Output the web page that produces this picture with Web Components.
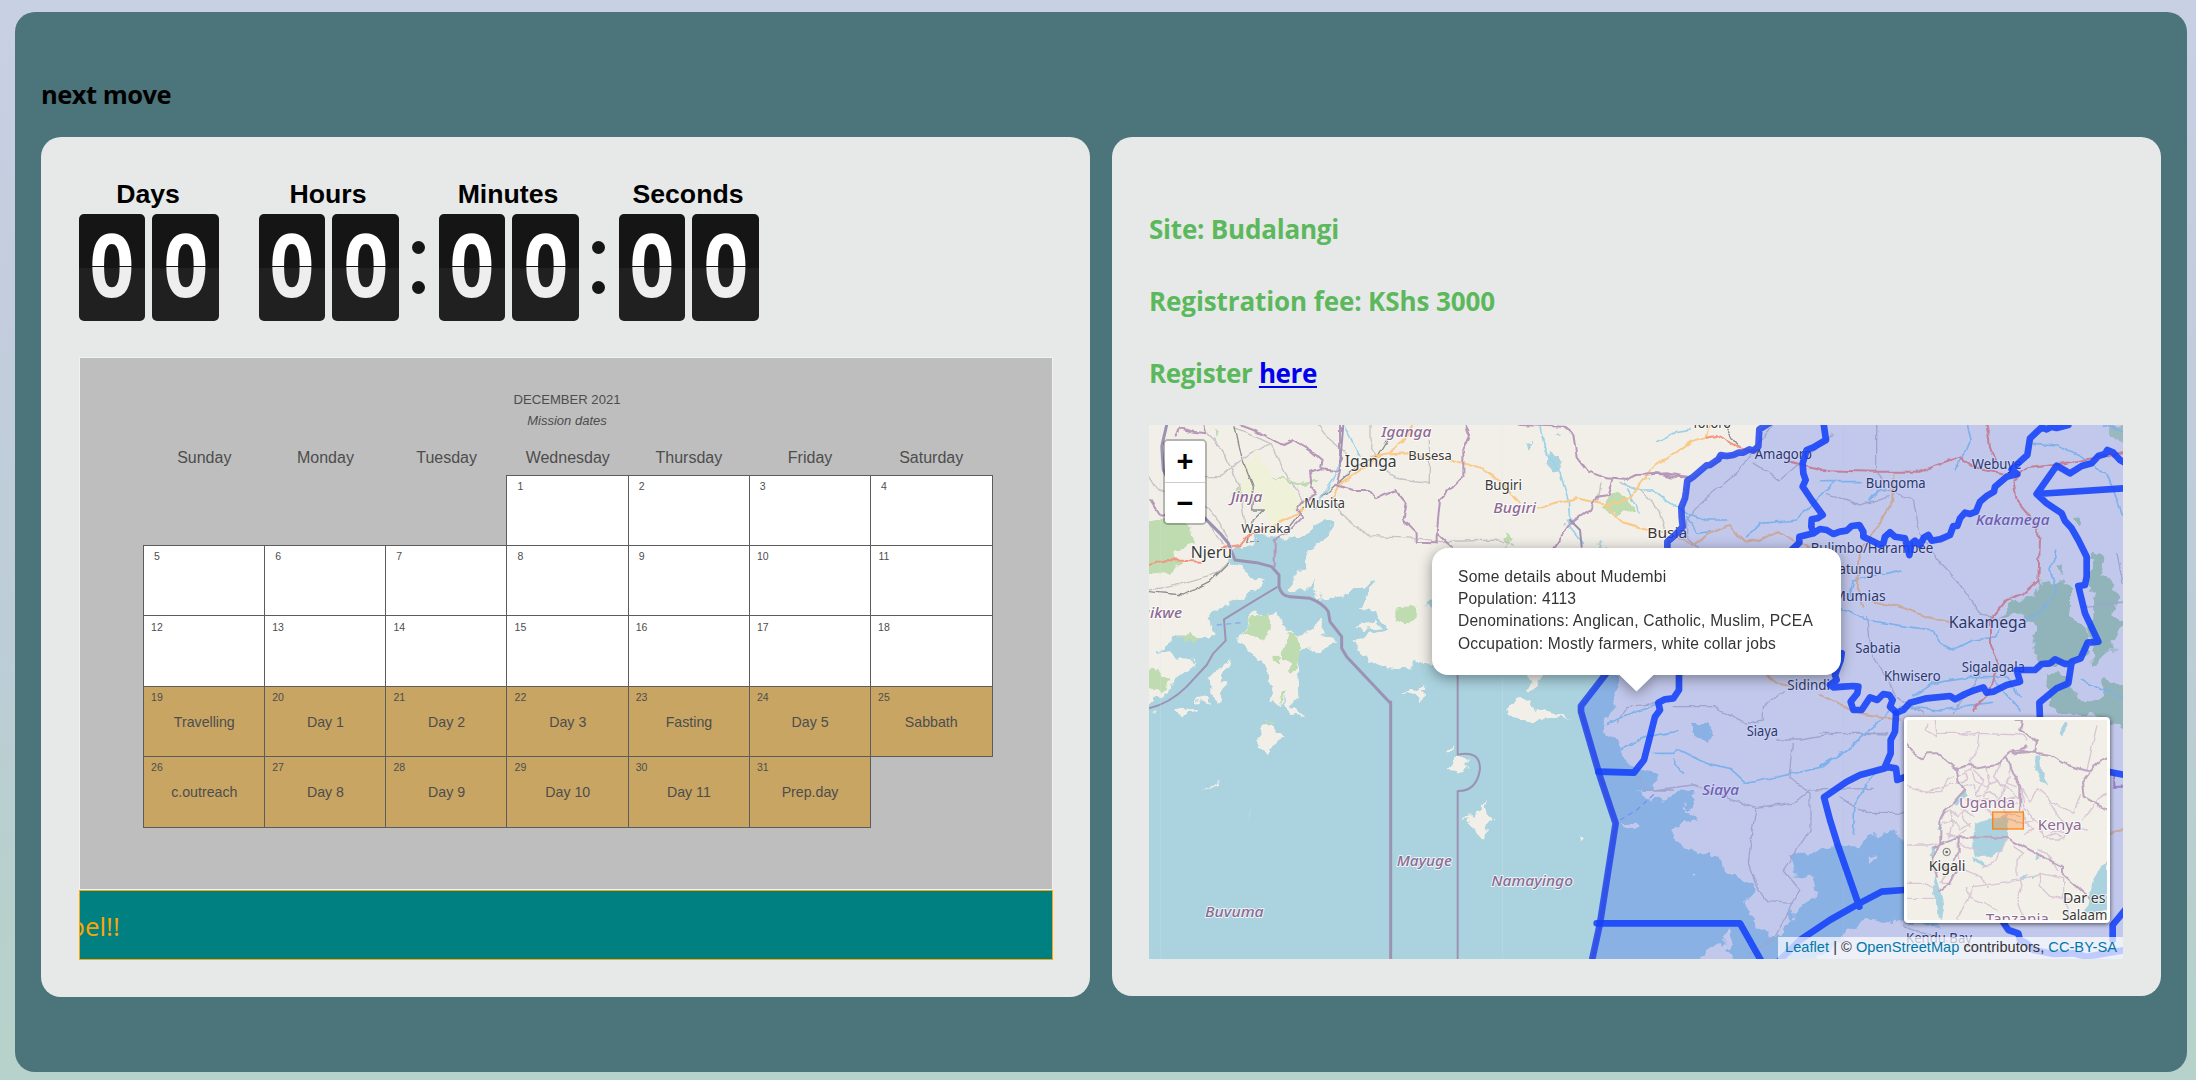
<!DOCTYPE html>
<html lang="en">
<head>
<meta charset="utf-8">
<title>next move</title>
<style>
html,body{margin:0;height:100%}
body{background:linear-gradient(to bottom,#c8d1e3 0%,#c4cdde 25%,#bccdd6 60%,#b7d0cc 85%,#b7d2cb 100%);font-family:"Open Sans","Noto Sans",sans-serif;height:1080px;overflow:hidden;display:flow-root}
</style>
</head>
<body>
<next-move heading="next move">
  <info-card slot="cards">
    <flip-clock></flip-clock>
    <mission-calendar></mission-calendar>
    <ticker-bar>pel!!</ticker-bar>
  </info-card>
  <info-card slot="cards" class="right">
    <site-line w="190">Site: Budalangi</site-line>
    <site-line w="346">Registration fee: KShs 3000</site-line>
    <site-line w="168">Register <a href="#">here</a></site-line>
    <site-map></site-map>
  </info-card>
</next-move>
<script>
const define=(name,html,after)=>customElements.define(name,class extends HTMLElement{
  connectedCallback(){
    if(this.shadowRoot)return;
    this.attachShadow({mode:'open'}).innerHTML=typeof html==='function'?html(this):html;
    if(after)after(this);
  }
});
/* Spreads a line of text to a set measure with letter spacing. */
const fit=(el,w)=>{
  const n=el.dataset.n||el.textContent.length;
  el.style.letterSpacing=((w-el.getBoundingClientRect().width)/n)+'px';
};

define('fit-text',`<style>:host{display:inline-block;white-space:pre}</style><slot></slot>`,
  el=>fit(el,+el.getAttribute('w')));

define('next-move',el=>`<style>
:host{display:flex;flex-direction:column;box-sizing:border-box;margin:12px 9px 0 15px;width:2172px;height:1060px;border-radius:20px;background:#4c747b;padding:62px 26px 0}
h2{margin:0 0 23px;font-size:25.5px;line-height:40px;height:40px;font-weight:700;color:#000}
.row{display:flex;gap:22px;align-items:flex-start}
</style><h2><fit-text w="130">${el.getAttribute('heading')}</fit-text></h2><div class="row"><slot name="cards"></slot></div>`);

define('info-card',`<style>
:host{display:flex;flex-direction:column;box-sizing:border-box;width:1049px;height:860px;border-radius:20px;background:#e7e9e8;padding:42px 37px 0 38px}
:host(.right){height:859px;padding:56px 38px 0 37px}
</style><slot></slot>`);

define('flip-unit',el=>`<style>
:host{display:flex;flex-direction:column;align-items:center;gap:5px;width:140px}
b{font:700 26.67px/30px "Liberation Sans",sans-serif;color:#000;margin-right:2px}
b fit-text{display:block}
div{display:flex;gap:7px}
.d{width:66px;height:107px;border-radius:5px;background:linear-gradient(#151515 54px,#202020 54px);display:flex;justify-content:center;overflow:hidden}
.d:last-child{width:67px}
.d span{font:700 87px/99px "Open Sans","Noto Sans",sans-serif;transform:scaleX(.9);background:linear-gradient(#fff 52px,#151515 52px 53px,#eee 53px);-webkit-background-clip:text;background-clip:text;color:transparent}
</style><b>${el.getAttribute('label')}</b><div><div class="d"><span>0</span></div><div class="d"><span>0</span></div></div>`);

define('flip-clock',`<style>
:host{display:flex;height:142px;margin-bottom:36px}
.sep{width:40px;display:flex;flex-direction:column;align-items:center;gap:27px;padding:62px 1px 0 0;box-sizing:border-box}
.sep i{width:13px;height:13px;border-radius:50%;background:#151515}
</style>
<flip-unit label="Days"></flip-unit><div class="sep"></div>
<flip-unit label="Hours"></flip-unit><div class="sep"><i></i><i></i></div>
<flip-unit label="Minutes"></flip-unit><div class="sep"><i></i><i></i></div>
<flip-unit label="Seconds"></flip-unit>`);

const events={19:'Travelling',20:'Day 1',21:'Day 2',22:'Day 3',23:'Fasting',24:'Day 5',25:'Sabbath',26:'c.outreach',27:'Day 8',28:'Day 9',29:'Day 10',30:'Day 11',31:'Prep.day'};
define('mission-calendar',()=>{
  let cells='<i></i><i></i><i></i>';
  for(let d=1;d<32;d++)cells+=`<div class="c${d>18?' on':''}"><small>${d}</small>${events[d]?`<span>${events[d]}</span>`:''}</div>`;
  return `<style>
:host{display:flex;flex-direction:column;align-items:center;box-sizing:border-box;width:974px;height:533px;border:1px solid #f1f2f2;background:#bebebe;padding:31.5px 0 0 2px;font-family:"Liberation Sans",sans-serif;color:#4d4d4d}
h3{margin:0 0 1.3px;font:400 13.1px/20px "Liberation Sans",sans-serif}
em{font-size:13px;line-height:20px;margin-bottom:17.7px}
.w,.g{display:grid;grid-template-columns:repeat(7,1fr);width:848.1px;margin-left:1.5px}
.w{font-size:16px;line-height:20px;text-align:center;margin-bottom:6.8px}
.g{grid-template-rows:repeat(5,70.35px)}
.c{margin:-.75px;border:1px solid #5c5c5c;background:#fff;display:flex;flex-direction:column;align-items:center}
.on{background:#c8a563}
small{font-size:10.5px;line-height:14px;width:26px;text-align:center;align-self:flex-start;margin-top:3.5px}
span{font-size:14.2px;line-height:18px;margin-top:9px}
</style><h3>DECEMBER 2021</h3><em>Mission dates</em>
<div class="w">${'Sunday Monday Tuesday Wednesday Thursday Friday Saturday'.split(' ').map(d=>`<div>${d}</div>`).join('')}</div>
<div class="g">${cells}</div>`;
});

define('ticker-bar',`<style>
:host{display:block;box-sizing:border-box;width:974px;height:70px;border:1px solid orange;background:teal;color:orange;font-size:26px;line-height:71px;overflow:hidden;white-space:nowrap}
div{margin-left:-11px}
</style><div><fit-text w="53.5"><slot></slot></fit-text></div>`);

define('site-line',`<style>
:host{display:block;height:72px;line-height:72px;font-size:26px;font-weight:700;color:#5cb85c;white-space:nowrap}
span{display:inline-block;white-space:pre}
::slotted(a){color:#00e;text-decoration-thickness:2px;text-underline-offset:3px}
</style><span><slot></slot></span>`,el=>{
  const s=el.shadowRoot.querySelector('span');
  s.dataset.n=el.textContent.length;
  fit(s,+el.getAttribute('w'));
});

/* Map labels: [x, baseline, width, size, text, kind]; kind "d" is a district. */
const labels=[
[724,50,150,40,'Iganga','d'],[805,119,130,35,'Busesa'],[614,140,156,43,'Iganga'],[493,263,122,37,'Musita'],
[272,246,95,40,'Jinja','d'],[304,338,148,35,'Wairaka'],[152,415,124,43,'Njeru'],[-26,595,152,40,'Buikwe','d'],
[1034,210,112,37,'Bugiri'],[1060,278,128,40,'Bugiri','d'],[1655,24,118,37,'Tororo'],[1844,118,172,36,'Amagoro'],
[1522,353,120,39,'Busia'],[2012,399,368,36,'Bulimbo/Harambee'],[2177,203,180,36,'Bungoma'],[2495,148,150,36,'Webuye'],
[2507,314,222,40,'Kakamega','d'],[2062,461,163,36,'Matungu'],[2080,542,157,36,'Mumias'],[2426,624,234,43,'Kakamega'],
[2146,700,136,36,'Sabatia'],[2465,755,190,36,'Sigalagala'],[2232,784,170,36,'Khwisero'],[1942,809,128,36,'Sidindi'],
[1820,947,94,37,'Siaya'],[1687,1124,110,40,'Siaya','d'],[1054,1397,245,40,'Namayingo','d'],[770,1337,166,40,'Mayuge','d'],
[195,1490,176,40,'Buvuma','d'],[2298,1570,198,36,'Kendu Bay']];
const mini=[[156,265,168,38,'Uganda','m'],[392,330,132,38,'Kenya','m'],[65,453,110,37,'Kigali'],[468,550,128,37,'Dar es'],[465,600,136,37,'Salaam'],[236,613,190,38,'Tanzania','m']];
const text=a=>a.map(([x,y,w,s,t,k])=>`<text class="${k||''}" x="${x}" y="${y}" font-size="${(s*1.14).toFixed(1)}" textLength="${w}" lengthAdjust="spacingAndGlyphs">${t}</text>`).join('');

const svgStyle=`
svg{display:block}
text{font-family:"Noto Sans",sans-serif;fill:#3a3a3a;stroke:#fff;stroke-opacity:.75;stroke-width:6;paint-order:stroke;stroke-linejoin:round}
.d{font-style:italic;font-weight:500;fill:#8d6a93}.m{fill:#8d6a93}
.w{fill:#aad3df}.l{fill:#f2efe9}.f{fill:#bfdcb0}
.n,.r,.o,.p,.s,.k,.x{fill:none;stroke-linejoin:round;stroke-linecap:round}
.n{stroke:#c4c4c4;stroke-width:4}.o{stroke:#fbc987;stroke-width:6}.x{stroke:#f2967f;stroke-width:6}
.p{stroke:#b797b8;stroke-width:6}.k{stroke:#9c93b2;stroke-width:9}.s{stroke:#9bd2e8;stroke-width:5}.r{stroke:#8e8e8e;stroke-width:4}`;

define('map-overview',`<style>
:host{display:block;box-sizing:border-box;width:206px;height:206px;border:3px solid #fff;border-radius:4px;box-shadow:0 1px 5px rgba(0,0,0,.65);overflow:hidden;background:#f2efe9}
${svgStyle}.p{stroke:#d8c6d5;stroke-width:4}.k{stroke:#bda5bf;stroke-width:6}
</style><svg width="200" height="200" viewBox="0 0 600 600">
<defs><filter id="j" color-interpolation-filters="sRGB" x="0" y="0" width="100%" height="100%"><feTurbulence type="fractalNoise" baseFrequency=".035" numOctaves="2" seed="4"/><feDisplacementMap in="SourceGraphic" scale="14" xChannelSelector="R" yChannelSelector="G"/></filter></defs>
<g filter="url(#j)">
<path class="w" d="M205 310 230 300 300 285 303 350 285 395 250 410 205 410 195 380ZM385 105 400 110 402 150 420 190 425 200 405 185 385 150ZM468 15 475 5 482 15 465 50 458 40ZM600 425 582 435 555 490 545 555 525 580 600 570ZM75 380 85 390 80 415 68 410ZM85 465 95 500 105 520 112 560 105 600 95 595 90 545 75 520ZM90 325 110 312 103 330ZM140 250 175 212 180 225 150 260ZM335 475 360 462 355 480ZM375 470 385 462 380 480ZM390 395 400 415 385 425ZM195 410 235 430 250 440 200 425Z"/>
<path class="p" d="M60 15 55 30 90 50 85 0M90 40 160 40 190 35M160 40 200 45 215 40 345 45M215 45 210 100 190 120 195 145M0 195 50 215 110 200 140 190M50 215 100 215 120 180 140 170M360 70 340 100 310 90M345 45 360 60M570 15 555 80 540 150M600 220 570 240 550 270 530 300M345 205 370 245 390 205 440 250 500 280 520 225M430 250 460 300 500 320 540 330M345 205 350 260 390 310M395 330 430 360 460 360 480 340 440 330 430 350M0 375 60 375 110 370M0 490 50 490 90 510M0 535 90 535M150 600 200 500 300 485 340 480 345 500 330 540 350 600M175 500 185 530 270 570M340 480 400 460 470 475M400 465 400 500 430 530 500 540M470 475 470 530 490 600M300 355 270 420 230 440M450 450 420 400 390 390M150 440 220 470 240 500M320 380 350 400 330 420 330 470M215 395 150 370 155 420"/>
<path class="p" d="M150 170 190 150 205 180 240 200 270 180 320 220 340 240M165 200 200 190 210 230 250 215 280 240 330 230M200 150 230 180 210 220M240 145 250 190 230 230M280 130 260 170 290 200 280 240M310 140 300 190 330 200M180 240 260 240 330 250M110 280 130 270 150 290 170 270 200 290M110 310 140 300 160 330 190 310M120 340 150 350 180 330M130 270 140 310 125 350M160 270 170 300 190 320M240 270 270 300 300 280 340 290M290 265 300 300 350 310 380 300M350 270 360 310 380 330 350 340M400 300 410 350 450 340 470 360M110 430 120 460 100 490 130 490M90 450 150 430M310 170 290 200M170 150 180 180 150 190"/>
<path class="k" d="M0 75 20 100 45 115 60 100 90 100 120 125 150 150 155 190 175 210 140 250 115 270 100 300 100 370M150 145 190 135 210 145 270 135 320 90 430 105M300 115 320 160 340 200 340 270M320 100 385 95 390 65 340 30 345 0 325 0M430 105 480 135 550 155 570 130 600 115M550 155 525 190 530 230 600 270M100 370 150 352 300 354 465 440 465 460 550 535M100 370 75 420 90 470M155 355 155 400 140 420M80 385 110 370M100 510 130 490 150 450M320 95 360 80"/>
</g>
<circle cx="119" cy="396" r="11" fill="none" stroke="#777" stroke-width="3"/><circle cx="119" cy="396" r="4" fill="#666"/>
${text(mini)}
<rect x="257" y="276" width="92" height="51" fill="#ff7800" fill-opacity=".3" stroke="#ff7800" stroke-opacity=".85" stroke-width="4"/>
</svg>`);

define('map-popup',`<style>
:host{display:flex;flex-direction:column;align-items:center;filter:drop-shadow(0 3px 7px rgba(0,0,0,.4))}
.b{box-sizing:border-box;width:409px;height:127px;border-radius:16px;background:#fff;padding:17.7px 26px;font:15.6px/22.4px "Liberation Sans",sans-serif;color:#333}
.b div{height:22.4px}
.t{width:34px;height:16.5px;background:#fff;clip-path:polygon(0 0,100% 0,50% 100%)}
</style><div class="b"><div><fit-text w="208.5">Some details about Mudembi</fit-text></div><div><fit-text w="118">Population: 4113</fit-text></div><div><fit-text w="355">Denominations: Anglican, Catholic, Muslim, PCEA</fit-text></div><div><fit-text w="318">Occupation: Mostly farmers, white collar jobs</fit-text></div></div><div class="t"></div>`);

define('zoom-control',`<style>
:host{display:flex;flex-direction:column;width:40px;border:2px solid rgba(0,0,0,.25);border-radius:5px;background-clip:padding-box}
div{height:41px;background:#fff;border-radius:3px 3px 0 0;display:flex;align-items:center;justify-content:center;font:700 29px/41px "Liberation Sans",sans-serif;color:#000}
div+div{border-top:1px solid #ccc;border-radius:0 0 3px 3px;height:40px;line-height:40px}
</style><div>+</div><div>−</div>`);

define('map-credits',`<style>
:host{display:block;box-sizing:border-box;height:22px;width:345px;padding-left:7px;background:rgba(255,255,255,.7);font:14.6px/21px "Liberation Sans",sans-serif;color:#333;white-space:nowrap}
a{color:#0078a8;text-decoration:none}
</style><fit-text w="332"><a>Leaflet</a> | © <a>OpenStreetMap</a> contributors, <a>CC-BY-SA</a></fit-text>`);

define('site-map',`<style>
:host{display:block;position:relative;width:974px;height:534px;margin-top:16px;overflow:hidden;background:#f2efe9}
${svgStyle}
.z{stroke:#1541fb;stroke-opacity:.88;stroke-width:20;fill:none;stroke-linejoin:round;stroke-linecap:round}
zoom-control{position:absolute;left:14px;top:14px}
map-popup{position:absolute;left:283px;top:123px}
map-overview{position:absolute;left:755px;top:292px}
map-credits{position:absolute;right:0;bottom:0}
</style>
<svg width="974" height="534" viewBox="27 15 2922 1602">
<defs>
<filter id="c" color-interpolation-filters="sRGB" filterUnits="userSpaceOnUse" x="0" y="0" width="3000" height="1640"><feTurbulence type="fractalNoise" baseFrequency=".025" numOctaves="3" seed="7"/><feDisplacementMap in="SourceGraphic" scale="46" xChannelSelector="R" yChannelSelector="G"/></filter>
<filter id="q" color-interpolation-filters="sRGB" filterUnits="userSpaceOnUse" x="0" y="0" width="3000" height="1640"><feTurbulence type="fractalNoise" baseFrequency=".03" numOctaves="2" seed="3"/><feDisplacementMap in="SourceGraphic" scale="16" xChannelSelector="R" yChannelSelector="G"/></filter>
</defs>
<g filter="url(#c)">
<path class="f" d="M-10 310 100 290 155 320 165 375 100 390 130 430 90 460 30 450 -10 460ZM320 170 345 185 335 205 315 195ZM270 230 300 195 300 215ZM400 165 440 175 480 185 540 170 530 185 470 195 410 180ZM775 560 830 560 825 600 795 620 775 605ZM2907 10 2960 10 2960 65 2907 60ZM1400 240 1430 215 1470 240 1490 270 1430 285 1385 262ZM1515 185 1530 178 1530 192ZM1095 340 1115 360 1100 385ZM215 35 235 40 225 50Z"/>
<path d="M320 130 350 90 375 150 430 180 470 210 490 260 440 295 390 310 370 260 290 235Z" fill="#eff2d8"/>
<path fill="#b4d5ab" d="M2850 390 2880 400 2890 460 2930 520 2920 580 2950 600 2920 680 2890 710 2860 730 2850 640 2860 560 2850 480ZM2690 490 2760 480 2790 500 2790 570 2810 610 2850 640 2840 700 2790 730 2700 740 2680 690 2690 620 2650 590 2580 590 2620 550 2680 530ZM2740 440 2770 430 2760 465ZM2800 290 2830 280 2820 315ZM2720 760 2780 760 2790 800 2840 850 2890 830 2890 780 2960 790 2960 930 2860 890 2750 880 2720 800Z"/>
<path class="w" d="M262 395 330 385 345 355 400 345 430 365 475 345 505 345 525 310 575 310 580 335 535 365 492 400 500 440 455 465 445 505 490 505 530 480 515 512 550 540 600 525 640 500 705 490 680 530 660 560 705 580 715 600 742 625 700 640 640 655 660 700 720 740 780 745 850 722 900 740 1430 750 1430 812 1420 870 1380 910 1440 980 1475 1040 1550 1070 1540 1105 1500 1120 1565 1150 1600 1125 1660 1100 1670 1135 1630 1170 1670 1195 1590 1230 1630 1280 1670 1310 1730 1300 1760 1360 1840 1390 1850 1410 1815 1450 1850 1510 1890 1560 1930 1530 1960 1480 2035 1430 2010 1365 1960 1360 1950 1310 2080 1280 2090 1265 2150 1290 2200 1240 2250 1240 2310 1260 2400 1300 2400 1520 2300 1510 2210 1500 2130 1520 2110 1560 2000 1640 0 1640 0 870 80 810 130 760 170 720 130 718 60 692 110 645 170 655 225 640 205 590 250 560 310 530 375 485 300 440 262 425Z"/>
<path class="w" d="M1665 915 1700 915 1715 950 1710 975 1685 955 1665 940ZM1230 95 1255 110 1265 130 1240 155 1225 130ZM1160 70 1190 65 1165 85ZM1250 40 1270 42 1255 50ZM1270 300 1300 295 1285 320ZM1370 375 1410 370 1400 380ZM855 555 890 550 885 570Z"/>
<path class="l" d="M295 640 340 585 420 572 440 625 480 650 540 600 560 650 590 670 560 685 500 690 470 705 475 840 440 850 440 800 400 800 380 745 330 690 290 670ZM380 850 400 800 425 780 450 800 465 860 490 890 450 880 435 830 425 860 400 840ZM200 780 250 730 270 720 250 760 245 850 230 850 225 800ZM170 835 205 825 210 860 190 850ZM105 868 170 860 150 880 120 890ZM20 830 60 820 30 850ZM35 875 60 875 50 885ZM360 925 400 915 415 945 440 955 410 965 380 1005 365 985 350 950ZM192 1105 240 1080 230 1095ZM330 1185 340 1165 325 1200ZM790 820 830 810 850 800 845 855 830 835ZM915 995 940 970 935 1000ZM925 1050 950 1018 985 1015 970 1055ZM965 1195 1010 1190 1030 1150 1040 1180 1060 1195 1040 1220 1035 1250 1000 1225ZM1105 870 1130 835 1150 830 1175 860 1200 870 1290 895 1240 900 1180 910 1110 885ZM1155 765 1210 765 1185 800 1175 815 1165 790ZM1310 1255 1325 1250 1325 1270ZM1440 1210 1480 1208 1500 1220 1460 1225ZM1660 1355 1670 1355 1665 1370ZM1670 1640 1700 1590 1740 1570 1770 1600 1780 1640ZM1745 1590 1765 1540 1780 1530 1760 1590ZM2175 1310 2210 1310 2190 1330ZM640 625 700 605 720 625 670 630ZM750 675 765 700 770 720 755 700Z"/>
<path class="f" d="M300 640 330 600 390 570 385 650 350 655ZM440 640 470 640 485 690 450 760 430 700ZM395 720 430 710 415 730ZM110 650 150 640 175 660 130 665ZM30 745 100 780 60 815 20 810ZM420 820 435 815 425 850ZM375 905 395 903 388 915Z"/>
</g>
<g filter="url(#q)">
<path class="n" d="M190 30 240 80 300 200 315 320M390 70 330 100 240 170 150 170M290 25 390 70 430 150 490 240M530 10 560 50 620 100M690 10 690 60 720 140 780 180 868 190 868 60M20 160 50 210 200 260 240 310 270 380M590 250 600 280 690 350 840 355 900 365 1080 360 1120 375M27 510 90 500 230 460 265 425M200 300 250 380M1590 380 1560 270 1500 210 1440 190M1640 300 1680 250 1790 160 1900 10M2210 15 2210 150 2240 210 2320 240 2340 340 2400 430 2450 480 2520 580 2580 600M1370 250 1380 190M2180 590 2190 690 2270 830 2350 880M1600 860 1720 860 1820 910 1870 900 1870 860 1930 815M1910 960 1980 960 2100 940 2240 945M1540 1110 1660 1095 1750 1130 1850 1165 1960 1150 2010 1110 2200 1105M1848 1165 1835 1240 1825 1330 1850 1400 1880 1445 1960 1450M1960 970 1950 1075 2010 1120 2010 1230 1930 1350 1980 1410 1900 1560 1830 1600M2040 940 2240 940M2100 1130 2180 1180 2300 1180M2290 1520 2420 1560 2560 1600M2530 740 2500 800 2440 880M1480 1050 1520 1110 1600 1110M1430 910 1460 860 1550 850M2830 560 2960 545M2060 220 2160 255 2250 230M1840 130 1920 180 1990 120 2080 40M1640 300 1640 350 1700 410M2930 400 2950 490"/>
<path class="r" d="M285 20 305 110 340 200 335 270 370 270 340 300 320 365 355 365M265 430 210 485 130 525 27 515M740 60 710 110 650 140 580 200 545 235M1750 10 1780 60 1800 85M490 265 440 330"/>
<path class="s" d="M615 20 640 70 660 110M600 130 580 180 520 270M1200 20 1215 90 1260 160 1285 240 1290 320 1330 370M1450 190 1480 210 1540 210 1580 240 1640 280 1700 300 1760 300M1550 65 1600 40 1650 30M1460 210 1500 280M1640 290 1670 340 1710 335M2480 15 2490 60 2470 110 2440 150M2040 185 2160 185M2190 240 2210 215 2240 215M1820 350 1860 310 1970 300 2080 190M2680 70 2750 75 2830 110 2870 150 2900 160 2920 210 2950 290M2280 450 2240 460 2140 480 2130 530M2100 565 2180 600 2300 620 2380 630 2400 670 2440 690 2500 660 2570 650 2580 630M2750 390 2730 450 2750 520 2700 580 2650 600M2320 830 2380 790 2500 770 2600 770 2640 830M1540 1000 1600 1000 1620 990 1700 1030 1770 1045 1820 1090 1940 1065 2050 1040 2100 1000M2040 1040 2120 990 2200 920 2250 870M2140 1240 2145 1150 2210 1050M1400 910 1480 880 1560 850M1440 990 1520 950 1610 935M1600 1020 1630 1060M2820 780 2960 840M2280 860 2400 870 2560 850M2890 15 2950 35M2560 780 2640 870"/>
<path class="o" d="M720 105 800 100 940 120 1020 145 1080 180 1140 250M820 15 790 65 745 100 690 110M720 110 660 150 600 190 575 235M490 270 430 300 380 325M1190 265 1240 250 1310 235 1400 255 1470 235 1530 150 1650 65 1700 50 1710 20M1400 260 1450 310 1520 330 1600 340 1660 375 1700 345 1770 315 1810 365 1860 360 1910 335 2000 380 2040 440 2130 450M2260 160 2260 240 2210 320 2160 400 2150 500 2170 560M2200 545 2280 560 2360 590 2440 610M1880 765 1910 790 1960 800M2040 825 2160 880 2280 900M2870 1240 2960 1230"/>
<path class="x" d="M27 435 80 420 180 425M240 385 300 375 320 350 380 325M1700 50 1730 45 1800 85 1860 100M1950 125 2040 150 2200 155 2340 155 2460 110 2500 140 2590 160M2540 15 2550 80 2570 130M2620 180 2660 145 2740 135 2860 115 2960 95M2620 180 2630 240 2680 300 2700 360 2695 480 2650 520 2600 540 2550 600 2550 680 2575 730 2540 830 2500 870"/>
<path class="p" d="M110 50 120 25 160 35 195 40 190 10M30 240 55 280 80 290M300 15 340 30 380 50 430 75 460 60 510 90 545 120 540 145 510 155 515 200 530 220 490 245 470 270 490 290 440 340 404 360 404 440M540 145 600 150M585 195 640 210 690 210 710 235 765 210 800 250 790 300 830 340 830 368 890 370 890 340 935 380M975 15 990 45 970 90 970 170 900 240 890 340M600 15 600 150 590 195M1140 15 1270 20 1300 45 1310 110 1345 155 1400 175 1460 180 1490 165 1580 160 1640 170M1420 180 1405 225 1370 230 1350 270 1290 310 1240 385M1550 160 1600 170 1640 172M2920 1060 2920 1100 2960 1100"/>
</g>
<path class="k" d="M80 15 65 80 70 150 120 250 190 290 240 340 265 370 285 420 350 428 395 440 417 465 417 500Q425 530 450 530L510 535Q550 550 565 575L570 605 605 650 605 685 620 710 750 848" />
<path class="k" stroke-width="11" d="M752 846V1617"/>
<path class="p" style="stroke:#9c93b2" d="M27 865Q90 850 140 800L200 735 220 700 257 662 252 598 330 550 410 502M953 700V1004Q1020 990 1020 1047Q1010 1115 953 1113V1617M1290 300 1320 330 1325 380M610 15 600 130"/>
<path d="M230 615 305 608M1440 1200 1490 1170 1545 1120" fill="none" stroke="#8faaf0" stroke-width="4" stroke-dasharray="16 12"/>
<path d="M61 15V1617M1087 15V1617M2110 15V1617" stroke="#dde4e8" stroke-opacity=".4" stroke-width="2"/>
${text(labels)}
<g transform="translate(1020 0)">
<path fill="#052dfa" fill-opacity=".2" d="M862 15 838 28 835 80 790 95 722 105 690 135 640 170 622 185 615 235 600 270 608 320 580 350 562 365 562 400 500 600 375 765 300 855 300 875 360 1070 407 1210 360 1510 335 1625H1940V0Z"/>
<path class="k" d="M300 865 360 1070 407 1210 360 1510 335 1625"/>
<path class="z" style="stroke:#2145ee;stroke-opacity:.85" d="M870 8 838 28 835 80 820 92 808 88 790 98 775 98 760 105 740 108 722 105 715 118 690 135 680 136 640 170 622 182 618 215 615 235 604 262 605 290 608 320 580 350 562 365 562 400 500 600 375 765 303 858 303 875 360 1070 407 1210 360 1510 335 1625"/>
</g>
<g transform="translate(2040 0)">
<path class="z" d="M10 5 18 60-20 82-40 90-52 130-50 160-43 180-52 200-25 240 8 285-8 295-25 298-26 320-20 340-62 350-62 368-85 390M-20 340 0 327 20 330 40 342 60 335 80 332 95 318 118 315 130 335 130 350 155 362 180 375 190 370 195 350 210 337 225 350 255 355 268 405 275 370 285 362 300 375 312 352 325 345 335 362 360 358 390 345 400 318 412 318 420 295 435 278 450 282 468 275 480 245 500 228 522 215 525 200 560 170 592 162 575 148 600 125 622 105 630 55 665 22 680 28 695 20 710 24 745 15"/>
<path class="z" d="M915 128 900 120 880 98 862 90 855 102 835 108 815 130 785 138 750 160 710 137 650 222 915 205M650 222 680 250 725 280 735 303 755 325 775 360 800 410 800 470 795 495 775 498 795 580 835 665 803 668 782 715 755 725 745 790 710 805 658 848 660 900M755 730 735 732 705 718 690 730 665 732 645 750 590 750 600 785 560 795 540 805 520 815 500 818 490 802 460 812 435 822 405 838 390 828 320 835 270 848 250 870 230 878 210 860 218 840 208 825 190 822 172 840 150 832 125 870 100 870 92 845 112 820 115 800 100 798 70 800 40 802 30 795 50 780 45 765 62 720 65 700"/>
<path class="z" d="M228 880 225 935 212 960 212 1000 195 1040 228 1045 232 1080 252 1072M195 1045 120 1065 80 1085 12 1132 30 1200 55 1280 118 1460M252 1410 185 1415 118 1450 30 1500-60 1560-120 1620M865 1055 915 1065M915 1470 878 1515 878 1560M545 1500 565 1530 595 1540 600 1560 620 1570 640 1590 700 1602 760 1600 800 1610 915 1590"/>
<path class="z" d="M-665 1055-558 1058-528 1020-505 930-495 890-480 870-485 848-465 838-440 835-423 810-423 765M-670 1510H-240L-175 1625"/>
</g>
</svg>
<zoom-control></zoom-control><map-popup></map-popup><map-overview></map-overview><map-credits></map-credits>`);
</script>
</body>
</html>
